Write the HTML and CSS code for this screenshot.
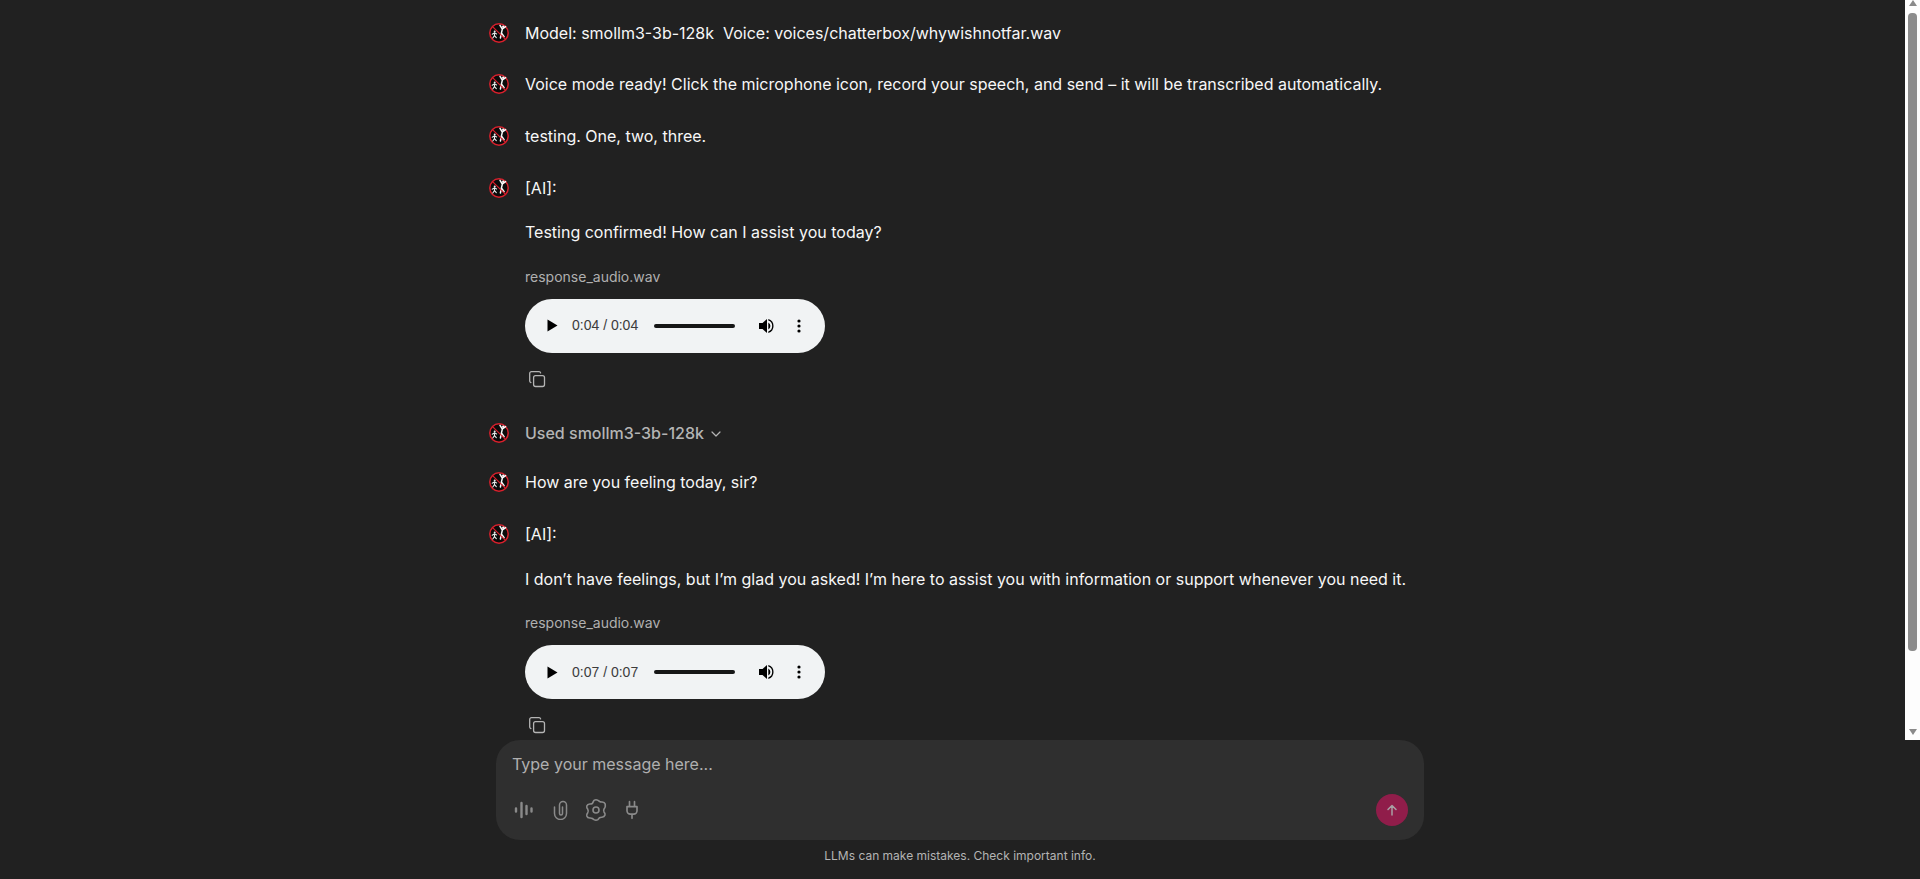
FILE: index.html
```html
<!DOCTYPE html>
<html lang="en">
<head>
    <meta charset="UTF-8">
    <meta name="viewport" content="width=device-width, initial-scale=1.0">
    <title>Chat</title>
    <link rel="stylesheet" href="styles.css">
</head>
<body>
    <svg class="sprites" width="0" height="0">
        <symbol id="avatar" viewBox="0 0 20 20">
            <circle cx="10" cy="10" r="9.200" fill="#0b0b0b" stroke="#d8202c" stroke-width="1.500"/>
            <path d="M13.400 5.800l-1 4.400M13.400 6l3.200-2.400M13.300 6l-2.300-3.600M12.400 10l-1 5M12.400 10l2.700 3.600" fill="none" stroke="#fafafa" stroke-width="1.500" stroke-linecap="round"/>
            <circle cx="14.200" cy="3.700" r="1.200" fill="#fafafa"/>
            <path d="M5.500 9.800v2.800l-1.700 2.400M5.500 12.600l1.800 2M3.200 11.200l2.300-1.400 2.100 1.200" fill="none" stroke="#ececec" stroke-width="1.100" stroke-linecap="round"/>
            <circle cx="5.700" cy="8.400" r="1" fill="#ececec"/>
            <path d="M3.800 3.800l12.400 12.400" stroke="#d8202c" stroke-width="1.200"/>
        </symbol>
        <symbol id="copy" viewBox="0 0 18 18">
            <rect x="5.600" y="5.600" width="10.900" height="10.900" rx="2" fill="none" stroke="currentColor" stroke-width="1.300"/>
            <path d="M12.600 2.900a1.600 1.600 0 0 0-1.500-1.200H3.500a1.800 1.800 0 0 0-1.800 1.800v7.600c0 .7.500 1.300 1.200 1.500" fill="none" stroke="currentColor" stroke-width="1.300" stroke-linecap="round"/>
        </symbol>
        <symbol id="play" viewBox="0 0 11 13"><path d="M.5.500v12l10-6z" fill="#000"/></symbol>
        <symbol id="volume" viewBox="0 0 16 16">
            <path d="M0 5v6h3.500L8 15V1L3.500 5z" fill="#000"/>
            <path d="M9.300 4.500a4 4 0 0 1 0 7z" fill="#000"/>
            <path d="M9.300 1a7.300 7.300 0 0 1 0 14v-1.600a5.700 5.700 0 0 0 0-10.800z" fill="#000"/>
        </symbol>
        <symbol id="dots" viewBox="0 0 4 14">
            <circle cx="2" cy="2" r="1.600" fill="#000"/>
            <circle cx="2" cy="7" r="1.600" fill="#000"/>
            <circle cx="2" cy="12" r="1.600" fill="#000"/>
        </symbol>
    </svg>

    <main class="chat">
        <div class="chat-top">
            <div class="thread">
                <div class="msg">
                    <svg class="avatar"><use href="#avatar"/></svg>
                    <div class="msg-body"><p class="pre">Model: smollm3-3b-128k  Voice: voices/chatterbox/whywishnotfar.wav</p></div>
                </div>
                <div class="msg">
                    <svg class="avatar"><use href="#avatar"/></svg>
                    <div class="msg-body"><p>Voice mode ready! Click the microphone icon, record your speech, and send – it will be transcribed automatically.</p></div>
                </div>
                <div class="msg">
                    <svg class="avatar"><use href="#avatar"/></svg>
                    <div class="msg-body"><p>testing. One, two, three.</p></div>
                </div>
                <div class="msg">
                    <svg class="avatar"><use href="#avatar"/></svg>
                    <div class="msg-body">
                        <p>[AI]:</p>
                        <p class="reply">Testing confirmed! How can I assist you today?</p>
                        <div class="file-name">response_audio.wav</div>
                        <div class="player">
                            <svg class="play"><use href="#play"/></svg>
                            <span class="time">0:04 / 0:04</span>
                            <span class="track"></span>
                            <svg class="volume"><use href="#volume"/></svg>
                            <svg class="dots"><use href="#dots"/></svg>
                        </div>
                        <svg class="copy"><use href="#copy"/></svg>
                    </div>
                </div>
                <div class="msg msg-used">
                    <svg class="avatar"><use href="#avatar"/></svg>
                    <div class="msg-body used">
                        Used smollm3-3b-128k
                        <svg class="chevron" viewBox="0 0 12 12"><path d="M2 4l4 4 4-4" fill="none" stroke="currentColor" stroke-width="1.200" stroke-linecap="round" stroke-linejoin="round"/></svg>
                    </div>
                </div>
                <div class="msg">
                    <svg class="avatar"><use href="#avatar"/></svg>
                    <div class="msg-body"><p>How are you feeling today, sir?</p></div>
                </div>
                <div class="msg">
                    <svg class="avatar"><use href="#avatar"/></svg>
                    <div class="msg-body">
                        <p>[AI]:</p>
                        <p class="reply">I don’t have feelings, but I’m glad you asked! I’m here to assist you with information or support whenever you need it.</p>
                        <div class="file-name">response_audio.wav</div>
                        <div class="player">
                            <svg class="play"><use href="#play"/></svg>
                            <span class="time">0:07 / 0:07</span>
                            <span class="track"></span>
                            <svg class="volume"><use href="#volume"/></svg>
                            <svg class="dots"><use href="#dots"/></svg>
                        </div>
                        <svg class="copy"><use href="#copy"/></svg>
                    </div>
                </div>
            </div>
            <div class="scrollbar">
                <span class="arrow arrow-up"></span>
                <span class="thumb"></span>
                <span class="arrow arrow-down"></span>
            </div>
        </div>

        <div class="composer">
            <div class="placeholder">Type your message here...</div>
            <div class="tools">
                <span class="tool">
                    <svg width="20" height="20" viewBox="0 0 20 20" fill="none" stroke="currentColor" stroke-width="2.400" stroke-linecap="round">
                        <path d="M2 8.500v3M7.500 3v14M12.500 6v8M17.500 8.500v3"/>
                    </svg>
                </span>
                <span class="tool">
                    <svg width="15" height="20" viewBox="0 0 15 20" fill="none" stroke="currentColor" stroke-width="1.500" stroke-linecap="round">
                        <path d="M1.500 7v6.500a6 6 0 0 0 12 0V5a3.500 3.500 0 0 0-7 0v8.500a1.500 1.500 0 0 0 3 0V7"/>
                    </svg>
                </span>
                <span class="tool">
                    <svg width="24" height="24" viewBox="0 0 24 24" fill="none" stroke="currentColor" stroke-width="1.600" stroke-linejoin="round">
                        <path d="M10 2.400q2-1.200 4 0l1.700 1.100q.9.500 2 .5h.5q2.400.1 3 2.100l.1 2.300q-.3 1.500-1.200 2.500t0 3.200q1.200 1.300.9 3-.6 2-3 2.100h-.5q-1.100 0-2 .5L14 21.600q-2 1.200-4 0l-1.700-1.100q-.9-.5-2-.5h-.5q-2.400-.1-3-2.100-.3-1.700.9-3t0-3.800q-1.200-1.300-.9-3 .6-2 3-2.100h.5q1.100 0 2-.5z"/>
                        <circle cx="12" cy="12" r="3"/>
                    </svg>
                </span>
                <span class="tool">
                    <svg width="20" height="20" viewBox="0 0 24 24" fill="none" stroke="currentColor" stroke-width="2" stroke-linecap="round" stroke-linejoin="round">
                        <path d="M12 22v-5M9 8V2M15 8V2M18 8v5a4 4 0 0 1-4 4h-4a4 4 0 0 1-4-4V8Z"/>
                    </svg>
                </span>
                <span class="send">
                    <svg width="14" height="14" viewBox="0 0 14 14" fill="none" stroke="currentColor" stroke-width="1.500" stroke-linecap="round" stroke-linejoin="round">
                        <path d="M7 12V2.500M3 6.500l4-4 4 4"/>
                    </svg>
                </span>
            </div>
        </div>
        <div class="disclaimer">LLMs can make mistakes. Check important info.</div>
    </main>
</body>
</html>
```

FILE: styles.css
```css
* {
    box-sizing: border-box;
}
html, body {
    margin: 0;
    height: 100%;
    overflow: hidden;
}
body {
    background-color: #212121;
    color: #f7f7f7;
    font-family: Inter, "Liberation Sans", sans-serif;
    font-size: 16px;
    line-height: 25.6px;
}
.sprites {
    display: block;
}
.chat {
    display: flex;
    flex-direction: column;
    height: 879px;
}
.chat-top {
    display: flex;
    height: 740px;
    flex: none;
    overflow: hidden;
}
.thread {
    width: 959px;
    margin: 0 auto;
    padding: 20.8px 16px 0;
    flex: none;
}
p {
    margin: 0;
}
.pre {
    white-space: pre;
}
.msg {
    display: flex;
    gap: 16px;
    margin-bottom: 26px;
}
.avatar {
    width: 20px;
    height: 20px;
    flex: none;
    margin-top: 2px;
}
.msg-body {
    min-width: 0;
    width: 900px;
}
.reply {
    margin-top: 19.2px;
}
.file-name {
    margin-top: 20px;
    font-size: 14px;
    line-height: 22.4px;
    color: #b0b0b0;
}
.player {
    display: flex;
    align-items: center;
    width: 300px;
    height: 54px;
    margin-top: 10.6px;
    padding-left: 22px;
    border-radius: 27px;
    background-color: #f1f3f4;
    color: #3c3c3c;
    font-family: "Liberation Sans", Arial, sans-serif;
    font-size: 14px;
}
.play {
    width: 11px;
    height: 13px;
    flex: none;
}
.time {
    margin-left: 14px;
    flex: none;
}
.track {
    width: 81px;
    height: 4px;
    margin-left: 16px;
    border-radius: 2px;
    background-color: #161616;
    flex: none;
}
.volume {
    width: 16px;
    height: 16px;
    margin-left: 24px;
    flex: none;
}
.dots {
    width: 4px;
    height: 14px;
    margin-left: 22px;
    flex: none;
}
.copy {
    display: block;
    width: 18px;
    height: 18px;
    margin: 17px 0 0 3px;
    color: #b4b4b4;
}
.msg-used {
    margin-top: 33px;
    margin-bottom: 23.8px;
}
.used {
    display: flex;
    align-items: center;
    gap: 6px;
    font-weight: 500;
    color: #b4b4b4;
}
.chevron {
    width: 12px;
    height: 12px;
}
.scrollbar {
    display: flex;
    flex-direction: column;
    align-items: center;
    width: 15px;
    height: 740px;
    background-color: #fdfdfd;
    flex: none;
}
.arrow {
    width: 0;
    height: 0;
    border-left: 4.5px solid transparent;
    border-right: 4.5px solid transparent;
    flex: none;
}
.arrow-up {
    border-bottom: 6px solid #8a8a8a;
}
.arrow-down {
    margin-top: auto;
    margin-bottom: 5px;
    border-top: 6px solid #8a8a8a;
}
.thumb {
    width: 9px;
    height: 638px;
    margin-top: 7px;
    border-radius: 4px;
    background-color: #8c8c8c;
}
.composer {
    width: 928px;
    height: 100px;
    margin: 0 auto;
    padding: 12px 16px 0;
    border-radius: 24px;
    background-color: #2f2f2f;
    flex: none;
}
.placeholder {
    color: #b0b0b0;
}
.tools {
    display: flex;
    align-items: center;
    margin: 16px 0 0 -6px;
    color: #8a8a8a;
}
.tool {
    display: flex;
    align-items: center;
    justify-content: center;
    width: 36px;
    height: 32px;
}
.send {
    display: flex;
    align-items: center;
    justify-content: center;
    width: 32px;
    height: 32px;
    margin-left: auto;
    border-radius: 50%;
    background-color: #901d4a;
    color: #a8a0a4;
}
.disclaimer {
    margin-top: 3px;
    text-align: center;
    font-size: 12px;
    line-height: 26px;
    color: #b4b4b4;
}
```
